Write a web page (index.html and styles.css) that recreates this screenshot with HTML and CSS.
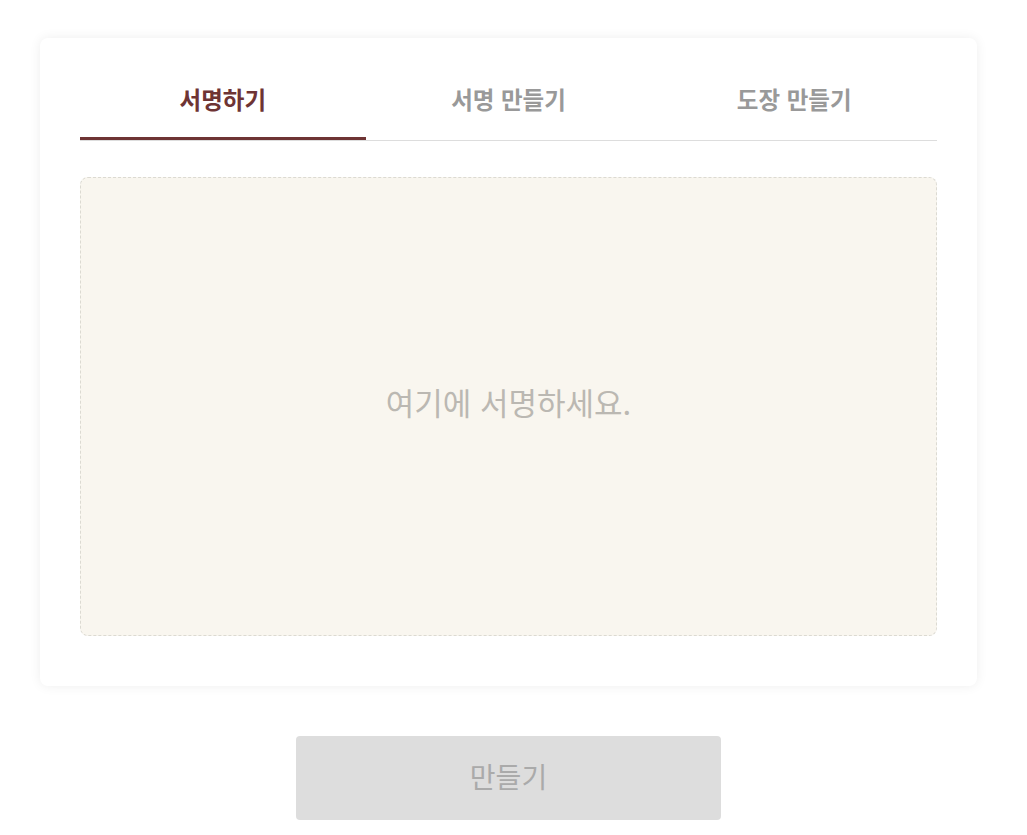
FILE: index.html
```html
<!DOCTYPE html>
<html lang="ko">
  <head>
    <meta charset="UTF-8" />
    <meta name="viewport" content="width=device-width, initial-scale=1.0" />
    <title>서명하기</title>
    <link rel="stylesheet" href="styles.css">
  </head>

  <body>
    <div class="sign-page">
      <div class="sign-card">
        <div class="sign-tabs">
          <div class="sign-tab active">서명하기</div>
          <div class="sign-tab">서명 만들기</div>
          <div class="sign-tab">도장 만들기</div>
        </div>
        <div class="sign-pad">
          <span class="sign-placeholder">여기에 서명하세요.</span>
        </div>
      </div>
      <button type="button" class="make-btn" disabled>만들기</button>
    </div>
  </body>
</html>
```

FILE: styles.css
```css
body {
  font-family: "Noto Sans CJK KR", "Noto Sans", sans-serif;
  margin: 0;
  padding: 0;
  background: #fff;
}

.sign-page {
  padding: 38px 50px 0 40px;
  display: flex;
  flex-direction: column;
  align-items: center;
}

.sign-card {
  box-sizing: border-box;
  width: 100%;
  height: 648px;
  padding: 40px 40px 50px;
  background: #fff;
  border-radius: 8px;
  box-shadow: 0 0 12px rgba(0, 0, 0, 0.07);
  display: flex;
  flex-direction: column;
}

.sign-tabs {
  display: flex;
  border-bottom: 1px solid #dddddd;
}

.sign-tab {
  flex: 1;
  position: relative;
  text-align: center;
  font-size: 23.5px;
  font-weight: bold;
  line-height: 33px;
  padding: 5px 0 24px;
  color: #999;
}

.sign-tab.active {
  color: #6e3434;
}

.sign-tab.active::after {
  content: "";
  position: absolute;
  left: 0;
  right: 0;
  bottom: 0;
  height: 3px;
  background: #6e3434;
}

.sign-pad {
  flex: 1;
  margin-top: 36px;
  border: 1px dashed #dcdad2;
  border-radius: 8px;
  background: #f9f6ef;
  display: flex;
  align-items: center;
  justify-content: center;
}

.sign-placeholder {
  font-size: 31px;
  line-height: 40px;
  padding-bottom: 10px;
  color: #bbb8b2;
}

.make-btn {
  margin-top: 50px;
  width: 425px;
  height: 84px;
  padding: 0 0 4px;
  border: none;
  border-radius: 4px;
  background: #dddddd;
  color: #aaa;
  font-family: inherit;
  font-size: 28px;
}
```
